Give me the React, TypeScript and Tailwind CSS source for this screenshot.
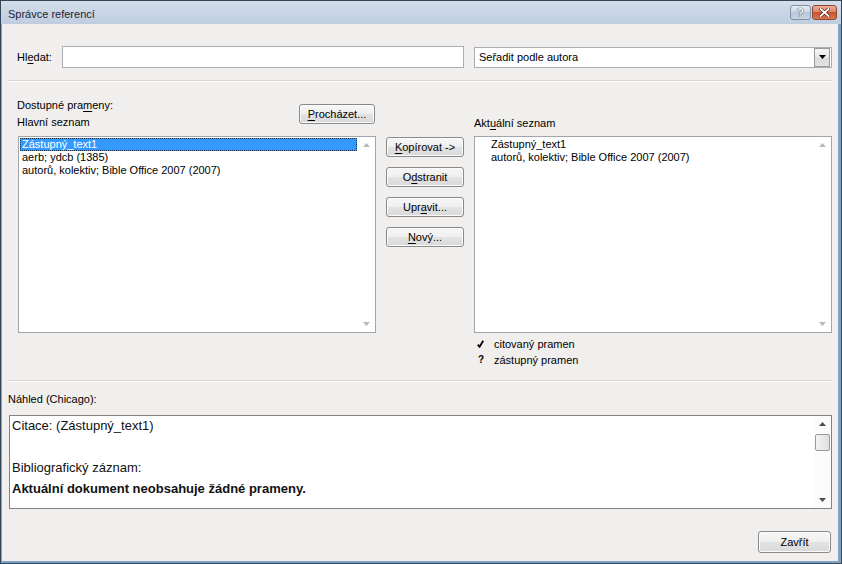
import React from 'react';

const btnCls =
  'rounded-[3px] border border-[#8a8a8a] bg-[linear-gradient(#f7f7f7_0%,#efefef_50%,#e3e3e3_50%,#d9d9d9_100%)] shadow-[inset_0_0_0_1px_#fbfbfb] text-[11px] text-black leading-none flex items-center justify-center';

const U = ({ children }: { children: React.ReactNode }) => (
  <span className="underline underline-offset-2">{children}</span>
);

const UpArrow = () => (
  <svg width="7" height="4" viewBox="0 0 7 4">
    <path d="M0 4 L3.5 0 L7 4 Z" fill="#b9b9b9" />
  </svg>
);

const DownArrow = ({ color = '#b9b9b9' }: { color?: string }) => (
  <svg width="7" height="4" viewBox="0 0 7 4">
    <path d="M0 0 L7 0 L3.5 4 Z" fill={color} />
  </svg>
);

const DisabledScroll = () => (
  <div className="w-[17px] flex flex-col items-center justify-between py-[6px]">
    <UpArrow />
    <DownArrow />
  </div>
);

const App = () => {
  return (
    <div className="w-[842px] h-[564px] flex flex-col border border-[#33475c] bg-[#f0efed] font-[Liberation_Sans,Arial,sans-serif] text-black overflow-hidden">
      {/* title bar */}
      <div className="h-[23px] shrink-0 flex items-start justify-between bg-[linear-gradient(#d4deea,#bfcde0)]">
        <span className="pl-[7px] pt-[5px] text-[11px] text-[#1b2533]">Správce referencí</span>
        <div className="flex gap-px pt-[4px] pr-[4px]">
          <div className="w-[21px] h-[15px] rounded-[3px] border border-[#7f90a8] bg-[linear-gradient(#e4eaf2_0%,#cdd7e4_50%,#b8c6d8_50%,#c9d5e4_100%)] flex items-center justify-center text-[12px] font-bold text-[#eef2f7] [text-shadow:0_0_1px_#3e4d63,0_0_1px_#3e4d63]">
            ?
          </div>
          <div className="w-[25px] h-[15px] rounded-[3px] border border-[#8a4a36] bg-[linear-gradient(#ecae98_0%,#dd7f60_50%,#c95430_50%,#d9774f_100%)] flex items-center justify-center">
            <svg width="11" height="9" viewBox="0 0 11 9">
              <path d="M1.5 1 L9.5 8 M9.5 1 L1.5 8" stroke="#5a2414" strokeWidth="3.2" strokeLinecap="square" />
              <path d="M1.5 1 L9.5 8 M9.5 1 L1.5 8" stroke="#ffffff" strokeWidth="1.8" strokeLinecap="square" />
            </svg>
          </div>
        </div>
      </div>

      {/* body */}
      <div className="flex-1 flex flex-col border-l border-r-[3px] border-b-[2px] border-[#7fa3c2] pl-[6px] pr-[6px]">
        {/* search row */}
        <div className="mt-[22px] h-[22px] flex items-center pl-[9px]">
          <span className="w-[45px] text-[11px]">
            Hl<U>e</U>dat:
          </span>
          <div className="w-[402px] h-[22px] border border-[#abadb3] bg-white" />
          <div className="ml-[10px] w-[358px] h-[21px] border border-[#abadb3] bg-white flex items-center">
            <span className="flex-1 pl-[4px] text-[11px]">Seřadit podle autora</span>
            <div className="w-[16px] h-[19px] mr-px border border-[#9a9a9a] bg-[linear-gradient(#f5f5f5_0%,#e8e8e8_50%,#dadada_50%,#e2e2e2_100%)] flex items-center justify-center">
              <DownArrow color="#000" />
            </div>
          </div>
        </div>

        <div className="mt-[12px] h-[2px] border-t border-[#d8d6d2] border-b border-b-white" />

        {/* lists row */}
        <div className="mt-[14px] flex gap-[10px] pl-[10px]">
          {/* left */}
          <div className="w-[358px] flex flex-col">
            <div className="h-[40px] flex justify-between items-start">
              <div className="-ml-px pt-px text-[11px] leading-[17px]">
                <div>
                  Dostupné pra<U>m</U>eny:
                </div>
                <div>Hlavní seznam</div>
              </div>
              <button className={`${btnCls} mt-[8px] mr-px w-[76px] h-[20px]`}>
                <U>P</U>rocházet...
              </button>
            </div>
            <div className="h-[197px] border border-[#a3a5aa] bg-white flex">
              <div className="flex-1 p-px text-[11px] leading-[13px]">
                <div className="h-[13px] pl-[2px] bg-[#3399ff] text-white outline-1 outline-dotted outline-[#16314e] -outline-offset-1">
                  Zástupný_text1
                </div>
                <div className="h-[13px] pl-[2px]">aerb; ydcb (1385)</div>
                <div className="h-[13px] pl-[2px]">autorů, kolektiv; Bible Office 2007 (2007)</div>
              </div>
              <DisabledScroll />
            </div>
          </div>

          {/* middle buttons */}
          <div className="w-[78px] pt-[41px] flex flex-col gap-[10px]">
            <button className={`${btnCls} h-[20px] border-[#6f7a88]`}>
              <U>K</U>opírovat -&gt;
            </button>
            <button className={`${btnCls} h-[20px]`}>
              O<U>d</U>stranit
            </button>
            <button className={`${btnCls} h-[20px]`}>
              Upr<U>a</U>vit...
            </button>
            <button className={`${btnCls} h-[20px]`}>
              <U>N</U>ový...
            </button>
          </div>

          {/* right */}
          <div className="w-[358px] flex flex-col">
            <div className="h-[40px] flex items-end pb-[5px] text-[11px] leading-[16px]">
              <span>
                Akt<U>u</U>ální seznam
              </span>
            </div>
            <div className="h-[197px] border border-[#a3a5aa] bg-white flex">
              <div className="flex-1 p-px pl-[16px] text-[11px] leading-[13px]">
                <div className="h-[13px]">Zástupný_text1</div>
                <div className="h-[13px]">autorů, kolektiv; Bible Office 2007 (2007)</div>
              </div>
              <DisabledScroll />
            </div>
            <div className="mt-[3px] text-[11px] leading-[16px]">
              <div className="flex items-center h-[16px]">
                <span className="w-[20px] pl-[3px]">
                  <svg width="7" height="8" viewBox="0 0 7 8">
                    <path d="M0.8 4.6 L2.6 6.8 L6.2 0.8" stroke="#000" strokeWidth="1.8" fill="none" />
                  </svg>
                </span>
                <span>citovaný pramen</span>
              </div>
              <div className="flex items-center h-[16px]">
                <span className="w-[20px] pl-[4px] font-bold text-[10px]">?</span>
                <span>zástupný pramen</span>
              </div>
            </div>
          </div>
        </div>

        <div className="mt-[12px] h-[2px] border-t border-[#d8d6d2] border-b border-b-white" />

        <div className="mt-[9px] h-[16px] text-[11px] leading-[16px]">Náhled (Chicago):</div>

        <div className="mt-[8px] ml-px h-[94px] border border-[#828282] bg-white flex">
          <div className="flex-1 pl-[2px] text-[13px] text-[#111]">
            <div className="h-[20px] leading-[20px]">Citace: (Zástupný_text1)</div>
            <div className="h-[21px]" />
            <div className="h-[21px] leading-[21px]">Bibliografický záznam:</div>
            <div className="h-[21px] leading-[21px] font-bold">Aktuální dokument neobsahuje žádné prameny.</div>
          </div>
          <div className="w-[17px] bg-[#fbfbfb] flex flex-col items-center pt-[6px] pb-[6px]">
            <svg width="7" height="4" viewBox="0 0 7 4">
              <path d="M0 4 L3.5 0 L7 4 Z" fill="#4d4d4d" />
            </svg>
            <div className="mt-[8px] w-[15px] h-[17px] rounded-[2px] border border-[#9a9a9a] bg-[linear-gradient(90deg,#f2f2f2,#e0e0e0)]" />
            <div className="flex-1" />
            <DownArrow color="#4d4d4d" />
          </div>
        </div>

        <div className="mt-[22px] flex justify-end pr-px">
          <button className={`${btnCls} w-[73px] h-[22px]`}>Zavřít</button>
        </div>
      </div>
    </div>
  );
};

export default App;
